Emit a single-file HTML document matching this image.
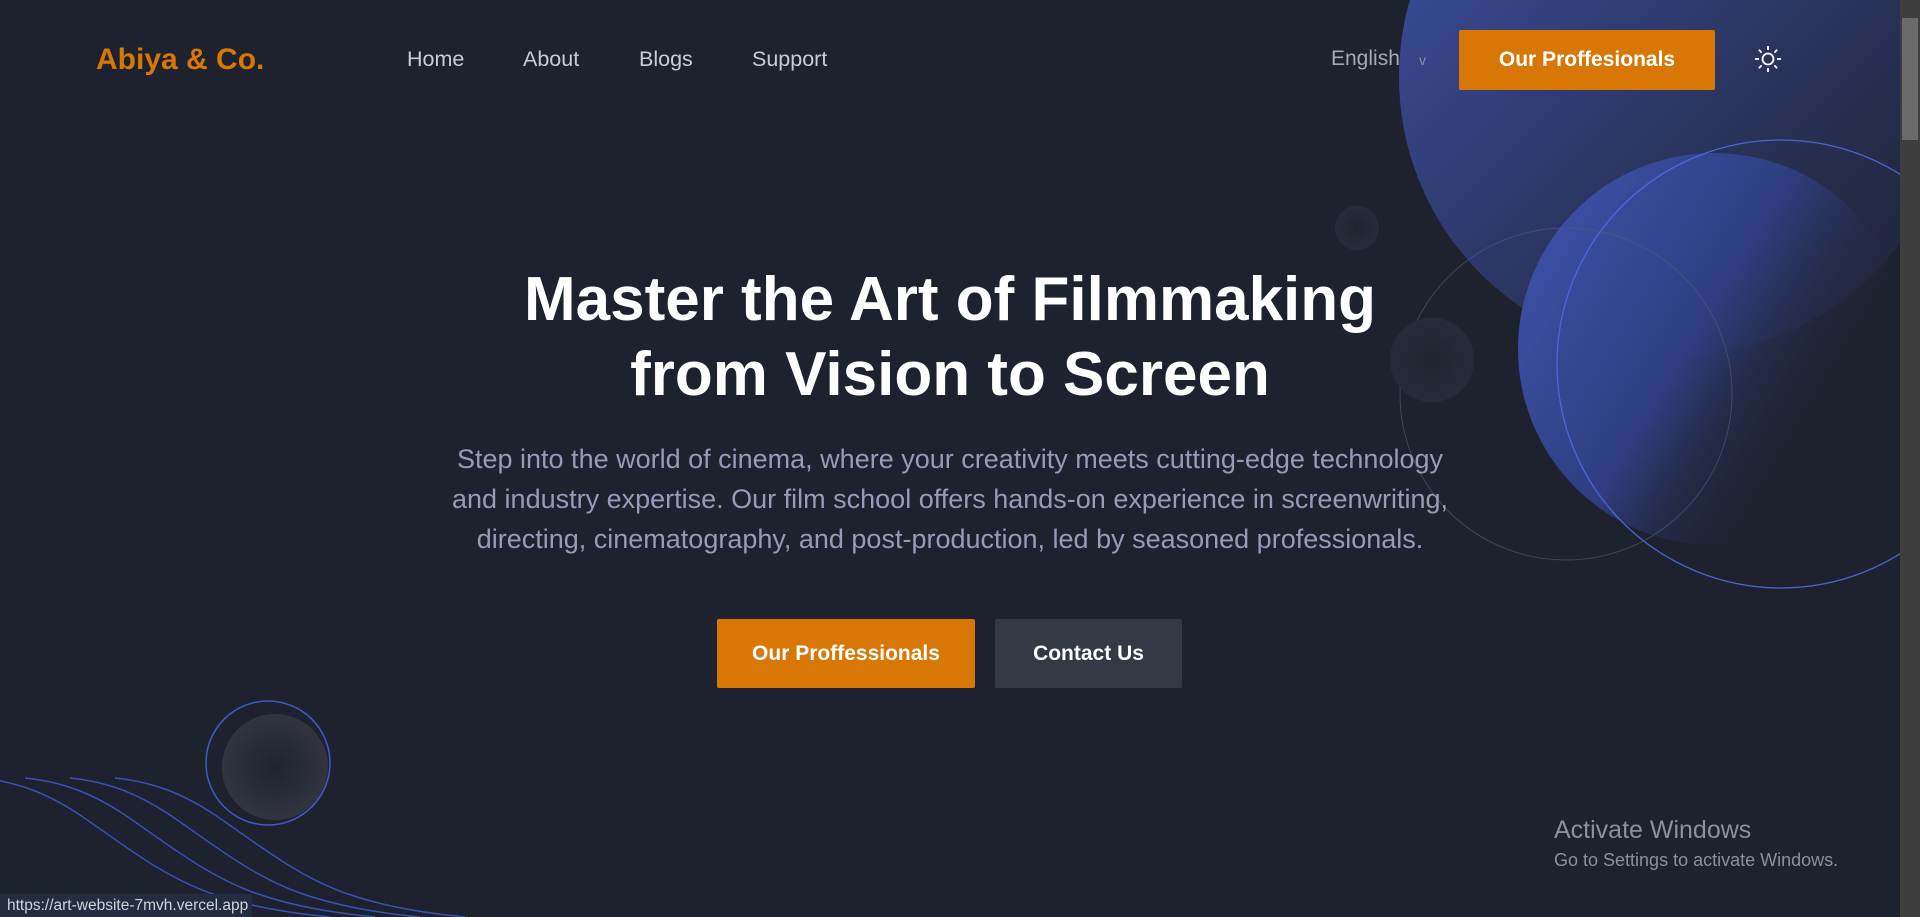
<!DOCTYPE html>
<html><head><meta charset="utf-8"><style>
*{margin:0;padding:0;box-sizing:border-box}
html,body{width:1920px;height:917px;overflow:hidden;background:#1e222e;font-family:"Liberation Sans",sans-serif}
.abs{position:absolute}
.nav a{position:absolute;top:47px;color:#c9cdd6;font-size:21.5px;text-decoration:none}
</style></head><body>
<svg class="abs" style="left:0;top:0" width="1920" height="917">
<defs>
<linearGradient id="g1" x1="0" y1="0" x2="1" y2="1"><stop offset="0" stop-color="#3d52a8"/><stop offset="0.7" stop-color="#262d4d"/><stop offset="1" stop-color="#1e222e"/></linearGradient>
<linearGradient id="g2" x1="0" y1="0.2" x2="1" y2="0.8"><stop offset="0" stop-color="#3c52aa"/><stop offset="0.45" stop-color="#2f3e80"/><stop offset="0.8" stop-color="#1e222e" stop-opacity="0"/></linearGradient>
<radialGradient id="g3"><stop offset="0" stop-color="#1f2230"/><stop offset="1" stop-color="#323540"/></radialGradient>
<radialGradient id="g4"><stop offset="0" stop-color="#20242f"/><stop offset="1" stop-color="#262b3c"/></radialGradient>
</defs>
<circle cx="1677" cy="77" r="278" fill="url(#g1)"/>
<circle cx="1714" cy="349" r="196" fill="url(#g2)"/>
<circle cx="1781" cy="364" r="224" fill="none" stroke="#4d6be0" stroke-width="1.3" opacity="0.9"/>
<circle cx="1566" cy="394" r="166" fill="none" stroke="#565c74" stroke-width="1" opacity="0.6"/>
<circle cx="1357" cy="228" r="22" fill="url(#g4)"/>
<circle cx="1432" cy="360" r="42" fill="url(#g4)"/>
<circle cx="268" cy="763" r="62" fill="none" stroke="#3f5bc4" stroke-width="1.5"/>
<circle cx="275" cy="767" r="53" fill="url(#g3)"/>
<g fill="none" stroke="#3a52b8" stroke-width="1.5">
<path id="w" d="M-20 778 C20 782 50 795 80 815 C120 842 160 875 210 893 C250 907 290 913 330 917"/>
<use href="#w" x="45"/>
<use href="#w" x="90"/>
<use href="#w" x="135"/>
</g>
</svg>
<div class="abs" style="left:96px;top:43px;color:#d97706;font-size:30px;font-weight:bold">Abiya &amp; Co.</div>
<div class="nav"><a style="left:407px">Home</a><a style="left:523px">About</a><a style="left:639px">Blogs</a><a style="left:752px">Support</a></div>
<div class="abs" style="left:1331px;top:47px;color:#a4a9b6;font-size:21px">English</div>
<div class="abs" style="left:1419px;top:52px;color:#8b90a0;font-size:14px">v</div>
<div class="abs" style="left:1459px;top:30px;width:256px;height:60px;background:#d97706;border-radius:2px;color:#fff;font-size:21px;font-weight:bold;text-align:center;line-height:60px">Our Proffesionals</div>
<svg class="abs" style="left:1754px;top:45px" width="28" height="28" viewBox="0 0 28 28" fill="none" stroke="#fff" stroke-width="1.8"><circle cx="14" cy="14" r="5.5"/><path d="M14 1v4M14 23v4M1 14h4M23 14h4M4.8 4.8l2.8 2.8M20.4 20.4l2.8 2.8M4.8 23.2l2.8-2.8M20.4 7.6l2.8-2.8"/></svg>
<div class="abs" style="left:1900px;top:0;width:20px;height:917px;background:#3e3e3e"></div>
<div class="abs" style="left:1902px;top:18px;width:16px;height:122px;background:#6b6b6b"></div>
<div class="abs" style="left:0;top:262px;width:1900px;text-align:center;color:#fff;font-size:62px;font-weight:bold;line-height:75px">Master the Art of Filmmaking<br>from Vision to Screen</div>
<div class="abs" style="left:350px;top:439px;width:1200px;text-align:center;color:#949cb8;font-size:27px;line-height:40px">Step into the world of cinema, where your creativity meets cutting-edge technology<br>and industry expertise. Our film school offers hands-on experience in screenwriting,<br>directing, cinematography, and post-production, led by seasoned professionals.</div>
<div class="abs" style="left:717px;top:619px;width:258px;height:69px;background:#d97706;border-radius:2px;color:#fff;font-size:21px;font-weight:bold;text-align:center;line-height:69px">Our Proffessionals</div>
<div class="abs" style="left:995px;top:619px;width:187px;height:69px;background:#353945;border-radius:2px;color:#fff;font-size:21px;font-weight:bold;text-align:center;line-height:69px">Contact Us</div>
<div class="abs" style="left:1554px;top:816px;color:#8d9099;font-size:25px">Activate Windows</div>
<div class="abs" style="left:1554px;top:850px;color:#8d9099;font-size:18px">Go to Settings to activate Windows.</div>
<div class="abs" style="left:0;top:894px;width:252px;height:23px;background:#222e40;color:#cfd3da;font-size:15.5px;line-height:23px;padding-left:7px">https://art-website-7mvh.vercel.app</div>
</body></html>
